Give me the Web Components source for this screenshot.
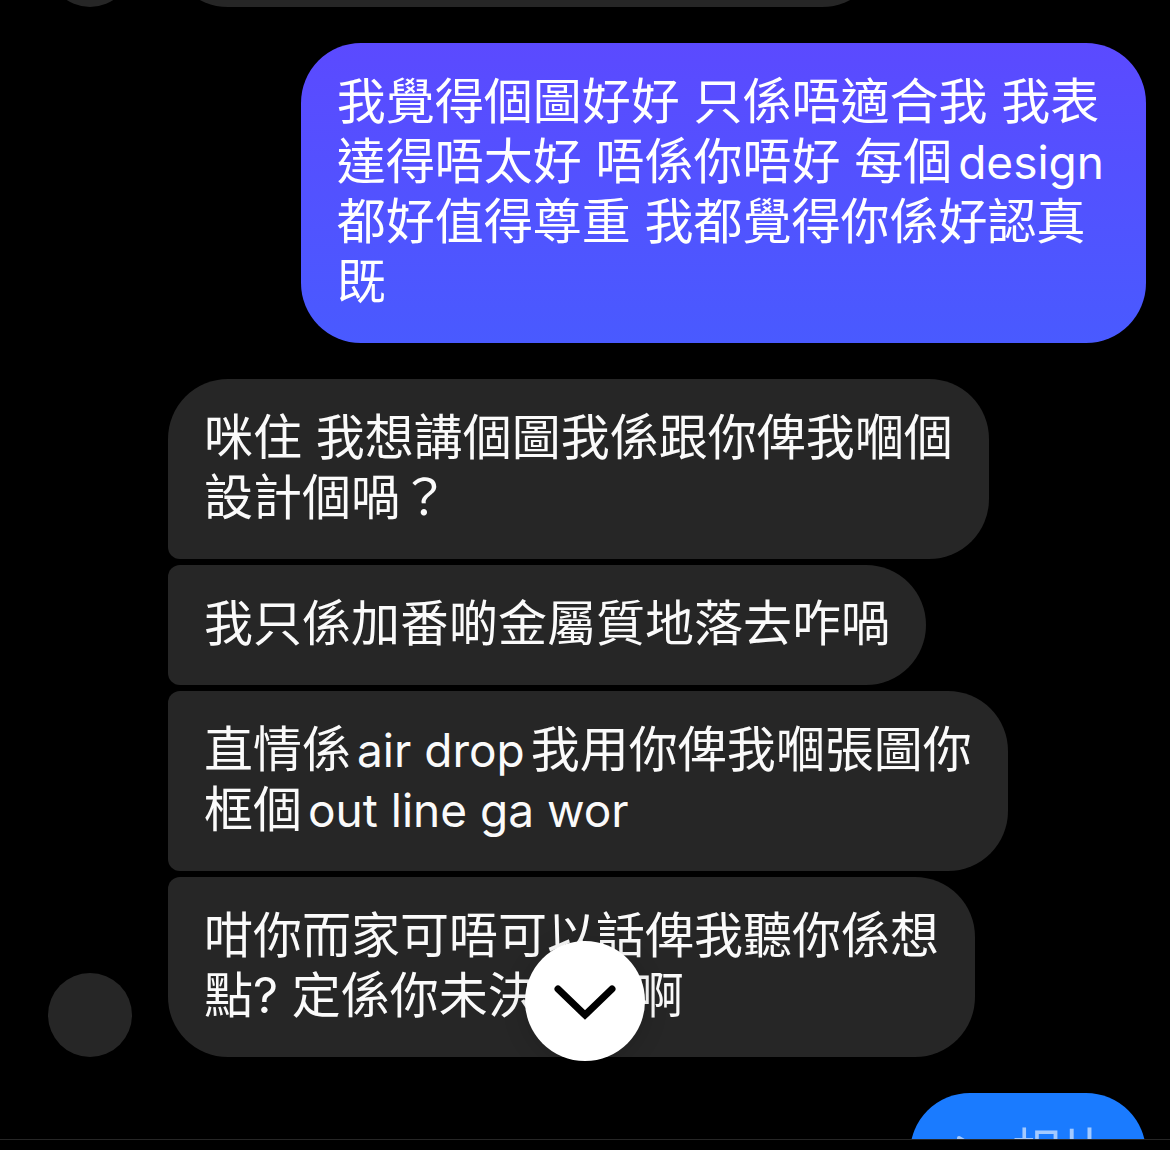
<!DOCTYPE html>
<html lang="zh-HK">
<head>
<meta charset="utf-8">
<meta name="viewport" content="width=device-width, initial-scale=1">
<title>對話</title>
<style>
  html, body { margin: 0; background: #000; }
  body { font-family: Inter, "Noto Sans CJK TC", sans-serif; }
</style>
</head>
<body>
<chat-screen>
  <message-group from="them">
    <chat-bubble class="earlier" corners="single"></chat-bubble>
  </message-group>
  <message-group from="me">
    <chat-bubble tone="violet">我覺得個圖好好 只係唔適合我 我表<br>達得唔太好 唔係你唔好 每個<latin-run>design</latin-run><br>都好值得尊重 我都覺得你係好認真<br>既</chat-bubble>
  </message-group>
  <message-group from="them">
    <chat-bubble corners="first">咪住 我想講個圖我係跟你俾我嗰個<br>設計個喎？</chat-bubble>
    <chat-bubble corners="middle">我只係加番啲金屬質地落去咋喎</chat-bubble>
    <chat-bubble corners="middle">直情係<latin-run>air drop</latin-run>我用你俾我嗰張圖你<br>框個<latin-run>out line ga wor</latin-run></chat-bubble>
    <chat-bubble corners="last">咁你而家可唔可以話俾我聽你係想<br>點? 定係你未決定好啊</chat-bubble>
  </message-group>
  <message-group from="me">
    <chat-bubble tone="blue"><play-icon></play-icon>相片</chat-bubble>
  </message-group>
</chat-screen>

<script>
const define = (name, html, setup) => {
  const template = document.createElement('template');
  template.innerHTML = html.trim();
  customElements.define(name, class extends HTMLElement {
    constructor() {
      super();
      this.attachShadow({ mode: 'open' }).append(template.content.cloneNode(true));
    }
    connectedCallback() { if (setup) setup(this, this.shadowRoot); }
  });
};

define('latin-run', `
  <style>
    :host { display: inline; font-size: 46px; margin: 0 6px; }
  </style><slot></slot>`);

define('play-icon', `
  <style>
    :host { display: inline-block; width: 48px; height: 48px; margin-right: 18px; vertical-align: middle; }
    svg { display: block; width: 100%; height: 100%; }
  </style>
  <svg viewBox="0 0 48 48" aria-hidden="true"><path d="M13 6 L39 21 L13 36 Z" fill="currentColor" stroke="currentColor" stroke-width="4" stroke-linejoin="round"/></svg>`);

define('chat-bubble', `
  <style>
    :host {
      display: block; box-sizing: border-box; width: fit-content; max-width: 100%;
      padding: 29px 36px 31px; border-radius: 60px;
      background: #262626; color: #fafafa;
      font-size: 49px; line-height: 60px;
    }
    :host([corners="first"]) { border-bottom-left-radius: 12px; }
    :host([corners="middle"]) { border-top-left-radius: 12px; border-bottom-left-radius: 12px; }
    :host([corners="last"]) { border-top-left-radius: 12px; }
    :host([tone="violet"]) { background: linear-gradient(#5b4aff, #495aff); color: #fff; }
    :host([tone="blue"]) { background: #1a7bff; color: #a3caff; }
    :host(.earlier) { width: 714px; min-height: 120px; }
  </style><slot></slot>`);

define('chat-avatar', `
  <style>
    :host { display: block; flex: none; width: 84px; height: 84px; border-radius: 50%; background: #262626; }
  </style>`);

define('message-group', `
  <style>
    :host { display: flex; align-items: flex-end; gap: 36px; padding: 0 24px 0 48px; }
    .stack { display: flex; flex-direction: column; gap: 6px; flex: 1; min-width: 0; align-items: flex-start; }
    :host([from="me"]) chat-avatar { display: none; }
    :host([from="me"]) .stack { align-items: flex-end; }
  </style>
  <chat-avatar></chat-avatar>
  <div class="stack"><slot></slot></div>`);

define('jump-button', `
  <style>
    :host { display: block; }
    button {
      display: grid; place-items: center; width: 120px; height: 120px; padding: 0;
      border: 0; border-radius: 50%; background: #fff; color: #000; cursor: pointer;
      box-shadow: 0 4px 24px rgba(0, 0, 0, .15);
    }
    svg { width: 72px; height: 72px; }
  </style>
  <button type="button" aria-label="捲到最新訊息">
    <svg viewBox="0 0 72 72" fill="none" stroke="currentColor" stroke-width="7" stroke-linecap="round" aria-hidden="true"><path d="M9 24 L36 50 L63 24"/></svg>
  </button>`);

define('chat-screen', `
  <style>
    :host { display: flex; flex-direction: column; position: relative; height: 100vh; overflow: hidden; background: #000; }
    main { flex: 1; min-height: 0; overflow-y: auto; scrollbar-width: none; display: flex; flex-direction: column; gap: 36px; }
    ::slotted(message-group) { flex: none; }
    footer { flex: none; height: 10px; border-top: 1px solid #262626; }
    jump-button { position: absolute; bottom: 89px; left: 50%; margin-left: -60px; }
  </style>
  <main><slot></slot></main>
  <footer></footer>
  <jump-button></jump-button>`, (host, root) => {
    const list = root.querySelector('main');
    list.scrollTop = 113;
    root.querySelector('jump-button').addEventListener('click', () => {
      list.scrollTo({ top: list.scrollHeight, behavior: 'smooth' });
    });
  });
</script>
</body>
</html>
